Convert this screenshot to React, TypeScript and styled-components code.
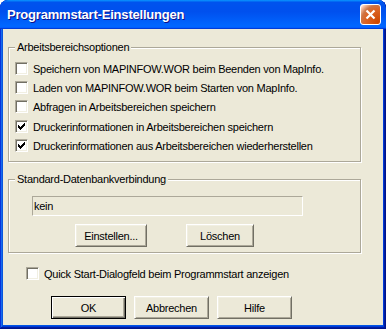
import * as React from 'react';
import styled, { createGlobalStyle } from 'styled-components';

const GlobalStyle = createGlobalStyle`
  html, body { margin: 0; padding: 0; background: #ffffff; }
  body { font-family: "Liberation Sans", Arial, sans-serif; font-size: 11px; letter-spacing: -0.25px; }
`;

const Window = styled.div`
  width: 386px;
  height: 329px;
  box-sizing: border-box;
  display: flex;
  flex-direction: column;
  border-radius: 8px 8px 0 0;
  background: #0055e5;
  padding: 0 3px 4px 3px;
  box-shadow: inset -1px -1px #00138c, inset 1px 1px #0831d9,
    inset -2px -2px #001ea0, inset 2px 2px #166aee,
    inset -3px -3px #003bda, inset 3px 3px #0855dd;
  overflow: hidden;
`;

const TitleBar = styled.div`
  height: 29px;
  margin: 0 -3px;
  padding: 0 5px 0 7px;
  display: flex;
  align-items: center;
  justify-content: space-between;
  border-radius: 8px 8px 0 0;
  background: linear-gradient(180deg, #0997ff, #0053ee 8%, #0050ee 40%, #0066ff 88%, #0066ff 93%, #005bff 95%, #003dd7 96%, #003dd7);
`;

const Title = styled.span`
  font-family: "Liberation Sans", Arial, sans-serif;
  font-weight: bold;
  font-size: 13px;
  color: #ffffff;
  text-shadow: 1px 1px #0f1089;
  letter-spacing: -0.2px;
`;

const CloseBtn = styled.div`
  width: 21px;
  height: 21px;
  box-sizing: border-box;
  border: 1px solid #ffffff;
  border-radius: 3px;
  display: flex;
  align-items: center;
  justify-content: center;
  background: radial-gradient(circle at 90% 90%, #cc4600 0, #dc6527 55%, #cd7546 70%, #ffccb2 90%, #ffffff 100%);
`;

const Body = styled.div`
  flex: 1;
  background: #ece9d8;
  padding: 18px 0 0 5px;
  color: #000;
`;

const Group = styled.div<{ $h: number; $mt?: number }>`
  position: relative;
  box-sizing: border-box;
  width: 353px;
  height: ${(p) => p.$h}px;
  margin-top: ${(p) => p.$mt || 0}px;
  border: 1px solid #aca899;
  box-shadow: inset 1px 1px 0 #ffffff, 1px 1px 0 #ffffff;
`;

const Legend = styled.span`
  position: absolute;
  top: -8px;
  left: 6px;
  padding: 0 2px;
  background: #ece9d8;
  line-height: 14px;
`;

const OptionList = styled.div`
  padding: 11px 0 0 6px;
  display: flex;
  flex-direction: column;
`;

const Row = styled.label<{ $indent?: number }>`
  height: 19px;
  display: flex;
  align-items: center;
  gap: 5px;
  padding-left: ${(p) => p.$indent || 0}px;
  &:nth-child(4) { margin-top: 1px; }
`;

const Box = styled.span`
  width: 13px;
  height: 13px;
  box-sizing: border-box;
  background: #ffffff;
  border-top: 1px solid #aca899;
  border-left: 1px solid #aca899;
  border-right: 1px solid #ffffff;
  border-bottom: 1px solid #ffffff;
  box-shadow: inset 1px 1px 0 #716f64, inset -1px -1px 0 #f1efe2;
  display: flex;
  align-items: center;
  justify-content: center;
  flex: none;
`;

const Field = styled.div`
  margin: 16px 0 0 23px;
  width: 271px;
  height: 20px;
  box-sizing: border-box;
  border-top: 1px solid #aca899;
  border-left: 1px solid #aca899;
  border-right: 1px solid #ffffff;
  border-bottom: 1px solid #ffffff;
  padding-left: 1px;
  line-height: 18px;
`;

const ButtonRow = styled.div<{ $pl: number; $mt: number; $gap: number }>`
  display: flex;
  gap: ${(p) => p.$gap}px;
  padding-left: ${(p) => p.$pl}px;
  margin-top: ${(p) => p.$mt}px;
`;

const Button = styled.div<{ $w: number; $default?: boolean }>`
  width: ${(p) => p.$w}px;
  height: 23px;
  box-sizing: border-box;
  display: flex;
  align-items: center;
  justify-content: center;
  background: #ece9d8;
  border-top: 1px solid ${(p) => (p.$default ? '#000' : '#ffffff')};
  border-left: 1px solid ${(p) => (p.$default ? '#000' : '#ffffff')};
  border-right: 1px solid ${(p) => (p.$default ? '#000' : '#716f64')};
  border-bottom: 1px solid ${(p) => (p.$default ? '#000' : '#716f64')};
  box-shadow: ${(p) =>
    p.$default
      ? 'inset 1px 1px 0 #ffffff, inset -1px -1px 0 #716f64, inset -2px -2px 0 #aca899'
      : 'inset 1px 1px 0 #f1efe2, inset -1px -1px 0 #aca899'};
`;

const Check = () => (
  <svg width="7" height="7" viewBox="0 0 7 7" shapeRendering="crispEdges">
    {[2, 3, 4, 3, 2, 1, 0].map((y, x) => (
      <rect key={x} x={x} y={y} width="1" height="3" fill="#000" />
    ))}
  </svg>
);

const CheckBox = ({ checked }: { checked?: boolean }) => <Box>{checked && <Check />}</Box>;

const options = [
  { text: 'Speichern von MAPINFOW.WOR beim Beenden von MapInfo.', checked: false },
  { text: 'Laden von MAPINFOW.WOR beim Starten von MapInfo.', checked: false },
  { text: 'Abfragen in Arbeitsbereichen speichern', checked: false },
  { text: 'Druckerinformationen in Arbeitsbereichen speichern', checked: true },
  { text: 'Druckerinformationen aus Arbeitsbereichen wiederherstellen', checked: true },
];

const App = () => {
  return (
    <>
      <GlobalStyle />
      <Window>
        <TitleBar>
          <Title>Programmstart-Einstellungen</Title>
          <CloseBtn>
            <svg width="13" height="13" viewBox="0 0 13 13">
              <path d="M2.5 2.5 L10.5 10.5 M10.5 2.5 L2.5 10.5" stroke="#fff" strokeWidth="2.2" />
            </svg>
          </CloseBtn>
        </TitleBar>
        <Body>
          <Group $h={115}>
            <Legend>Arbeitsbereichsoptionen</Legend>
            <OptionList>
              {options.map((o) => (
                <Row key={o.text}>
                  <CheckBox checked={o.checked} />
                  {o.text}
                </Row>
              ))}
            </OptionList>
          </Group>
          <Group $h={74} $mt={17}>
            <Legend>Standard-Datenbankverbindung</Legend>
            <Field>kein</Field>
            <ButtonRow $pl={66} $mt={8} $gap={39}>
              <Button $w={72}>Einstellen...</Button>
              <Button $w={68}>Löschen</Button>
            </ButtonRow>
          </Group>
          <Row $indent={18} style={{ marginTop: 11 }}>
            <CheckBox />
            Quick Start-Dialogfeld beim Programmstart anzeigen
          </Row>
          <ButtonRow $pl={43} $mt={13} $gap={8}>
            <Button $w={75} $default>OK</Button>
            <Button $w={75}>Abbrechen</Button>
            <Button $w={75}>Hilfe</Button>
          </ButtonRow>
        </Body>
      </Window>
    </>
  );
};

export default App;
